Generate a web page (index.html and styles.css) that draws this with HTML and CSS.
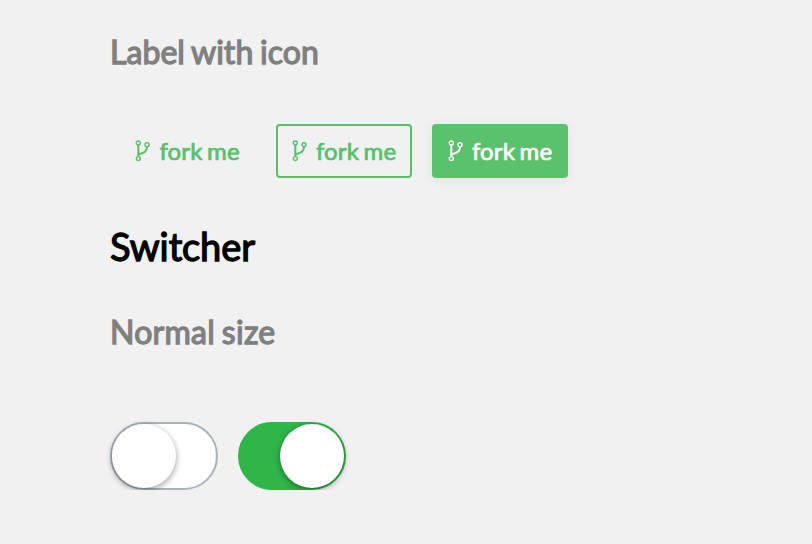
FILE: index.html
```html
<!DOCTYPE html>
<html lang="en">
<head>
<meta charset="utf-8">
<title>Labels and switchers</title>
<link rel="stylesheet" href="styles.css">
</head>
<body>
<svg class="defs" aria-hidden="true">
  <symbol id="fork" viewBox="0 0 16 22">
    <g fill="none" stroke="currentColor">
      <g stroke-width="1.4"><circle cx="3.300" cy="3" r="2"/><circle cx="3.300" cy="18.600" r="2"/><circle cx="12" cy="4.800" r="2"/></g>
      <path stroke-width="2" d="M3.300 5v11.600M12 6.800c0 3.200-1.300 5-4 6.100-2.200.9-4 .9-4.700 2.300"/>
    </g>
  </symbol>
</svg>
<main class="page">
  <h3 class="subtitle">Label with icon</h3>
  <div class="labels">
    <span class="label"><svg class="icon"><use href="#fork"/></svg>fork me</span>
    <span class="label outline"><svg class="icon"><use href="#fork"/></svg>fork me</span>
    <span class="label filled"><svg class="icon"><use href="#fork"/></svg>fork me</span>
  </div>
  <h2 class="title">Switcher</h2>
  <h3 class="subtitle size">Normal size</h3>
  <div class="switches">
    <span class="switch"><span class="knob"></span></span>
    <span class="switch on"><span class="knob"></span></span>
  </div>
</main>
</body>
</html>
```

FILE: styles.css
```css
* { box-sizing: border-box; }
body { margin: 0; background: #f1f1f1; font-family: Lato, sans-serif; }
.defs { position: absolute; width: 0; height: 0; }
.page { padding: 32px 110px 0; }
.subtitle { margin: 0; font-size: 32px; line-height: 40px; font-weight: 400; color: #808080; letter-spacing: 0.05px; word-spacing: -1.6px; -webkit-text-stroke: 1.3px currentColor; }
.size { letter-spacing: 0.25px; }
.labels { display: flex; gap: 20px; margin-top: 52px; }
.label { display: flex; align-items: center; width: 136px; height: 54px; padding: 0 0 2px 13.5px; border: 2px solid transparent; border-radius: 4px; color: #56c06a; font-size: 24px; font-weight: 400; letter-spacing: 0.1px; word-spacing: -1.6px; -webkit-text-stroke: 0.7px currentColor; white-space: nowrap; }
.label:first-child { width: 146px; padding-left: 23px; }
.outline { border-color: #56c06a; }
.filled { background: #5ac16c; border-color: #5ac16c; color: #fff; box-shadow: 0 2px 12px rgba(0,0,0,.07); }
.icon { width: 16px; height: 22px; margin: 2px 8.5px 0 0; flex: none; }
.title { margin: 44px 0 42px; font-size: 38px; line-height: 48px; font-weight: 400; color: #000; letter-spacing: -0.1px; -webkit-text-stroke: 1.3px currentColor; }
.switches { display: flex; gap: 20px; margin-top: 70px; }
.switch { display: flex; width: 108px; height: 68px; border: 2px solid #aab2bd; border-radius: 34px; background: #fff; }
.knob { width: 64px; height: 64px; border-radius: 50%; background: #fff; box-shadow: 0 2px 6px rgba(0,0,0,.4); }
.on { justify-content: flex-end; background: #30b54a; border-color: #30b54a; }
```
